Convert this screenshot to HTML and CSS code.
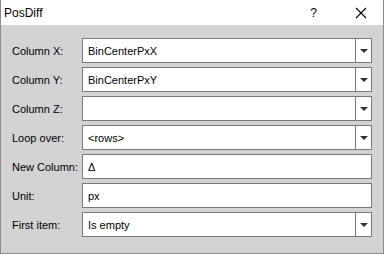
FILE: index.html
```html
<!DOCTYPE html>
<html>
	<head>
		<title>PosDiff</title><meta charset="utf-8">
		<link rel="stylesheet" href="styles.css">
	</head>
	<body>
		<div class="window">
			<div class="titlebar">
				<span class="title">PosDiff</span>
				<span class="help">?</span>
				<svg class="close" width="12" height="12" viewBox="0 0 12 12"><path d="M1 1L11 11M11 1L1 11" stroke="#000" stroke-width="1.1"/></svg>
			</div>
			<div class="form">
				<label>Column X:</label>
				<div class="field combo"><span class="value">BinCenterPxX</span><span class="drop"><i></i></span></div>
				<label>Column Y:</label>
				<div class="field combo"><span class="value">BinCenterPxY</span><span class="drop"><i></i></span></div>
				<label>Column Z:</label>
				<div class="field combo"><span class="value"></span><span class="drop"><i></i></span></div>
				<label>Loop over:</label>
				<div class="field combo"><span class="value">&lt;rows&gt;</span><span class="drop"><i></i></span></div>
				<label>New Column:</label>
				<div class="field"><span class="value">Δ</span></div>
				<label>Unit:</label>
				<div class="field"><span class="value">px</span></div>
				<label>First item:</label>
				<div class="field combo"><span class="value">Is empty</span><span class="drop"><i></i></span></div>
			</div>
		</div>
	</body>
</html>
```
FILE: styles.css
```css
body { margin: 0; font-family: "Liberation Sans", Arial, sans-serif; }
.window { width: 384px; height: 254px; box-sizing: border-box; border: 1px solid #8c8c8c; border-top: none; background: #d3d3d3; display: flex; flex-direction: column; }
.titlebar { height: 25px; background: #fff; display: flex; align-items: center; padding-left: 3px; }
.title { font-size: 12px; color: #000; flex: 1; }
.help { font-size: 12px; color: #000; margin-right: 38px; }
.close { margin-right: 16px; }
.form { display: grid; grid-template-columns: 70px 290px; grid-auto-rows: 25px; row-gap: 4px; padding: 13px 11px 0 11px; }
label { font-size: 11px; color: #000; display: flex; align-items: center; }
.field { background: #fff; border: 1px solid #7a7a7a; display: flex; align-items: center; }
.value { flex: 1; font-size: 11px; color: #000; padding-left: 5px; }
.drop { width: 15px; align-self: stretch; border-left: 1px solid #7a7a7a; display: flex; align-items: center; justify-content: center; }
.drop i { width: 0; height: 0; border-left: 4px solid transparent; border-right: 4px solid transparent; border-top: 4px solid #333; }
```
